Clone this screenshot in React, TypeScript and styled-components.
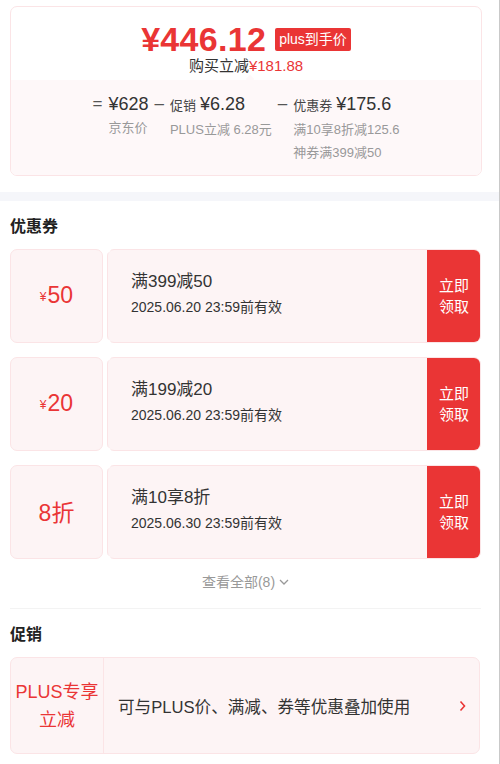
import { createGlobalStyle } from "styled-components";
import styled from "styled-components";

const GlobalStyle = createGlobalStyle`
  html, body {
    margin: 0;
    padding: 0;
    background: #fff;
  }
  body {
    font-family: "Liberation Sans", "Noto Sans CJK SC", sans-serif;
    color: #333;
  }
`;

const RED = "#ea3535";
const PINK_BG = "#fdf4f5";
const PINK_LINE = "#fbe4e6";

const Page = styled.div`
  width: 500px;
  min-height: 764px;
  box-sizing: border-box;
  border-right: 1px solid #c9c9c9;
  padding-top: 6px;
`;

const PriceCard = styled.div`
  margin: 0 17px 0 10px;
  border: 1px solid ${PINK_LINE};
  border-radius: 7px;
  overflow: hidden;
`;

const PriceTop = styled.div`
  display: flex;
  flex-direction: column;
  align-items: center;
  height: 73px;
  padding-top: 13px;
  box-sizing: border-box;
`;

const PriceLine = styled.div`
  display: flex;
  align-items: center;
  gap: 9px;
  height: 38px;
`;

const BigPrice = styled.span`
  font-size: 34px;
  font-weight: 700;
  color: ${RED};
  letter-spacing: 0.3px;
`;

const Badge = styled.span`
  background: ${RED};
  color: #fff;
  font-size: 14px;
  line-height: 23px;
  padding: 0 4px;
  border-radius: 2px;
`;

const Saving = styled.div`
  font-size: 15px;
  line-height: 20px;
  color: #333;
  margin-top: -2px;
  span {
    color: ${RED};
  }
`;

const Breakdown = styled.div`
  position: relative;
  background: #fef8f9;
  display: flex;
  align-items: flex-start;
  justify-content: center;
  gap: 6px;
  padding: 12px 0 11px;
  &::before {
    content: "";
    position: absolute;
    top: -4px;
    left: 236px;
    width: 6px;
    height: 6px;
    background: #fef8f9;
    transform: rotate(45deg);
  }
`;

const Column = styled.div`
  display: grid;
  grid-template-columns: auto auto;
  align-content: start;
  column-gap: 6px;
`;

const Op = styled.span`
  font-size: 17px;
  line-height: 24px;
  color: #555;
`;

const Amount = styled.div`
  font-size: 18px;
  line-height: 24px;
  color: #333;
  white-space: nowrap;
  small {
    font-size: 13px;
    margin-right: 4px;
    color: #444;
  }
`;

const SubNote = styled.div`
  grid-column: 2;
  font-size: 13px;
  line-height: 23px;
  color: #999;
  white-space: nowrap;
`;

const Band = styled.div`
  height: 9px;
  background: #f5f6fa;
  margin-top: 16px;
`;

const Section = styled.div`
  padding: 0 18px 0 10px;
`;

const SectionTitle = styled.div`
  font-size: 16px;
  font-weight: 700;
  line-height: 22px;
  color: #222;
  padding: 15px 0 11px;
`;

const CouponList = styled.div`
  display: flex;
  flex-direction: column;
  gap: 14px;
`;

const CouponRow = styled.div`
  position: relative;
  display: flex;
  gap: 4px;
  height: 94px;
  &::before,
  &::after {
    content: "";
    position: absolute;
    left: 92px;
    width: 9px;
    height: 9px;
    border-radius: 50%;
    background: #fff;
  }
  &::before {
    top: -5px;
  }
  &::after {
    bottom: -5px;
  }
`;

const Stub = styled.div`
  width: 93px;
  box-sizing: border-box;
  background: ${PINK_BG};
  border: 1px solid ${PINK_LINE};
  border-radius: 7px;
  display: flex;
  align-items: center;
  justify-content: center;
  color: ${RED};
  font-size: 23px;
  padding-bottom: 2px;
  small {
    font-size: 12px;
    margin-right: 1px;
    margin-top: 4px;
  }
`;

const CouponBody = styled.div`
  flex: 1;
  display: flex;
  background: ${PINK_BG};
  border: 1px solid ${PINK_LINE};
  border-radius: 7px;
  overflow: hidden;
`;

const CouponInfo = styled.div`
  flex: 1;
  display: flex;
  flex-direction: column;
  justify-content: center;
  padding-left: 23px;
  padding-bottom: 4px;
`;

const CouponTitle = styled.div`
  font-size: 17px;
  line-height: 26px;
  color: #333;
`;

const CouponDate = styled.div`
  font-size: 14px;
  line-height: 24px;
  color: #333;
`;

const TakeButton = styled.div`
  width: 54px;
  margin: -1px -1px -1px 0;
  background: ${RED};
  color: #fff;
  font-size: 15px;
  line-height: 21px;
  display: flex;
  align-items: center;
  justify-content: center;
  text-align: center;
`;

const MoreLink = styled.div`
  display: flex;
  align-items: center;
  justify-content: center;
  gap: 4px;
  font-size: 14px;
  color: #999;
  line-height: 20px;
  padding: 13px 0 16px;
`;

const Divider = styled.div`
  height: 1px;
  background: #f3f3f3;
`;

const PromoCard = styled.div`
  display: flex;
  height: 95px;
  background: ${PINK_BG};
  border: 1px solid ${PINK_LINE};
  border-radius: 7px;
  margin-right: 1px;
`;

const PromoTag = styled.div`
  width: 93px;
  box-sizing: border-box;
  border-right: 1px solid ${PINK_LINE};
  display: flex;
  align-items: center;
  justify-content: center;
  text-align: center;
  color: ${RED};
  font-size: 18px;
  line-height: 28px;
`;

const PromoText = styled.div`
  flex: 1;
  display: flex;
  align-items: center;
  padding-left: 14px;
  font-size: 16.6px;
  color: #333;
`;

const PromoArrow = styled.div`
  display: flex;
  align-items: center;
  padding-right: 13px;
`;

const coupons = [
  { unit: "¥", value: "50", title: "满399减50", date: "2025.06.20 23:59前有效" },
  { unit: "¥", value: "20", title: "满199减20", date: "2025.06.20 23:59前有效" },
  { unit: "", value: "8折", title: "满10享8折", date: "2025.06.30 23:59前有效" },
];

export default function App() {
  return (
    <Page>
      <GlobalStyle />
      <PriceCard>
        <PriceTop>
          <PriceLine>
            <BigPrice>¥446.12</BigPrice>
            <Badge>plus到手价</Badge>
          </PriceLine>
          <Saving>
            购买立减<span>¥181.88</span>
          </Saving>
        </PriceTop>
        <Breakdown>
          <Column>
            <Op>=</Op>
            <Amount>¥628</Amount>
            <SubNote>京东价</SubNote>
          </Column>
          <Column>
            <Op>–</Op>
            <Amount>
              <small>促销</small>¥6.28
            </Amount>
            <SubNote>PLUS立减 6.28元</SubNote>
          </Column>
          <Column>
            <Op>–</Op>
            <Amount>
              <small>优惠券</small>¥175.6
            </Amount>
            <SubNote>满10享8折减125.6</SubNote>
            <SubNote>神券满399减50</SubNote>
          </Column>
        </Breakdown>
      </PriceCard>

      <Band />

      <Section>
        <SectionTitle>优惠券</SectionTitle>
        <CouponList>
          {coupons.map((c) => (
            <CouponRow key={c.title}>
              <Stub>
                {c.unit && <small>{c.unit}</small>}
                {c.value}
              </Stub>
              <CouponBody>
                <CouponInfo>
                  <CouponTitle>{c.title}</CouponTitle>
                  <CouponDate>{c.date}</CouponDate>
                </CouponInfo>
                <TakeButton>
                  立即
                  <br />
                  领取
                </TakeButton>
              </CouponBody>
            </CouponRow>
          ))}
        </CouponList>
        <MoreLink>
          查看全部(8)
          <svg width="10" height="6" viewBox="0 0 10 6">
            <path d="M1 1l4 4 4-4" fill="none" stroke="#999" strokeWidth="1.3" />
          </svg>
        </MoreLink>
        <Divider />
        <SectionTitle>促销</SectionTitle>
        <PromoCard>
          <PromoTag>
            PLUS专享
            <br />
            立减
          </PromoTag>
          <PromoText>可与PLUS价、满减、券等优惠叠加使用</PromoText>
          <PromoArrow>
            <svg width="7" height="12" viewBox="0 0 7 12">
              <path d="M1.5 1.5l4 4.5-4 4.5" fill="none" stroke={RED} strokeWidth="1.6" />
            </svg>
          </PromoArrow>
        </PromoCard>
      </Section>
    </Page>
  );
}
